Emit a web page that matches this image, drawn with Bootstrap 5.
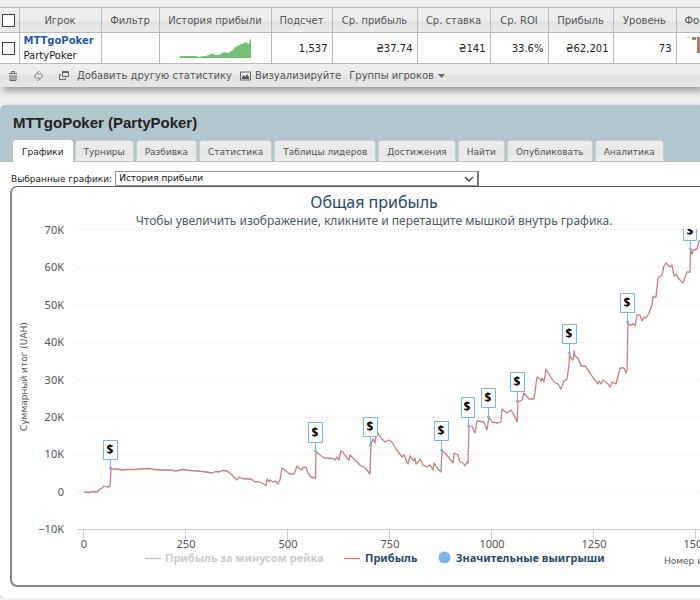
<!DOCTYPE html>
<html lang="ru">
<head>
<meta charset="utf-8">
<meta name="viewport" content="width=device-width, initial-scale=1">
<title>MTTgoPoker (PartyPoker)</title>
<link href="https://cdn.jsdelivr.net/npm/bootstrap@5.3.0/dist/css/bootstrap.min.css" rel="stylesheet">
<style>
body{background:#f1f1f1;font:10px/14px "DejaVu Sans",Verdana,sans-serif;color:#222;overflow-x:hidden}
.stats-box{margin-top:7px;box-shadow:3px 4px 7px #999;background:#fff}
.stats-grid{table-layout:fixed;width:762px;border-collapse:collapse;line-height:15px}
.stats-grid th,.stats-grid td{border:1px solid #bbb;padding:0 4px;text-align:right;white-space:nowrap}
.stats-grid th{height:25px;font-weight:400;text-align:center;color:#555;background:linear-gradient(#f0f0f0,#ebebeb 55%,#e2e2e2 56%,#ececec)}
.stats-grid td{height:29px}
.stats-grid th:first-child,.stats-grid td:first-child{border-left:0;padding:0 0 0 2px;text-align:left}
.stats-grid td:nth-child(2){text-align:left}
.stats-grid a{color:#1e5ca8}
.stats-grid input{appearance:none;display:block;width:13px;height:13px;border:1px solid #444;background:#fff}
.stats-grid svg{display:block}
.tools{height:23px;color:#555;background:linear-gradient(#efefef,#ebebeb 48%,#e3e3e3 50%,#e6e6e6);padding-left:8px}
.tools button{border:0;background:none;color:inherit;padding:0;white-space:nowrap}
.player{margin-top:18px;background:#fff;border-radius:5px 0 0 5px;box-shadow:3px 3px 6px #888;overflow:hidden}
.player-head{background:#b2c6ce;padding:8px 0 0 13px;border-bottom:1px solid #bbb}
.player-head h1{font:700 15px/20px "Liberation Sans",Arial,sans-serif;color:#222;margin:0 0 7px}
.tabs{gap:2px;font-size:9px;line-height:13px;margin-bottom:-1px}
.tabs a{height:22px;padding:5px 8px 0;border:1px solid #c6cdd0;border-bottom-color:#bbb;border-radius:3px 3px 0 0;background:linear-gradient(#eee,#e7e7e7 60%,#efefef);color:#555;text-decoration:none;white-space:nowrap}
.tabs a.active{background:#fff;border-color:#fff;color:#222}
.picker{padding:9px 0 0 11px;font-size:9px;gap:3px}
.picker select{appearance:none;width:364px;height:15px;border:1px solid #999;border-right:2px solid #777;border-radius:0;font-size:9px;line-height:13px;color:#111;padding:0 3px;background:#fff url("data:image/svg+xml,%3Csvg xmlns='http://www.w3.org/2000/svg' width='10' height='6'%3E%3Cpath d='M1 1l4 4 4-4' fill='none' stroke='%23444' stroke-width='1.4'/%3E%3C/svg%3E") no-repeat right 3px center}
.chart-frame{margin:0 0 11px 10px;border:2px solid #888;border-right:0;border-top:1px solid #555;border-radius:7px 0 0 7px;overflow:hidden}
.chart-frame svg{display:block;width:100%;height:398px;font-family:"Noto Sans","Open Sans",sans-serif}
</style>
<script src="https://cdn.jsdelivr.net/npm/bootstrap@5.3.0/dist/js/bootstrap.bundle.min.js"></script>
</head>
<body>
<section class="stats-box">
<div class="overflow-hidden">
<table class="stats-grid">
<colgroup><col style="width:19px"><col style="width:82px"><col style="width:58px"><col style="width:112px"><col style="width:61px"><col style="width:85px"><col style="width:73px"><col style="width:58px"><col style="width:65px"><col style="width:63px"><col style="width:86px"></colgroup>
<thead><tr><th><input type="checkbox" aria-label="Выбрать все"></th><th>Игрок</th><th>Фильтр</th><th>История прибыли</th><th>Подсчет</th><th>Ср. прибыль</th><th>Ср. ставка</th><th>Ср. ROI</th><th>Прибыль</th><th>Уровень</th><th class="text-start ps-2">Форма</th></tr></thead>
<tbody><tr><td><input type="checkbox" aria-label="Выбрать MTTgoPoker"></td><td><a href="#" class="fw-bold text-decoration-none">MTTgoPoker</a><br>PartyPoker</td><td></td>
<td><svg class="mx-auto" width="72" height="20"><path fill="#74bf73" d="M0 20v-1l2-1h15l3 1 4-1h3l2-1 4-1h2l2 1h2l3-1v-1l4-1 2 1h2l2-2 2-1 2-3 3-1 3-2h2l2-2 2 1 2 1 1-4 2-3h2l2-2V3l2-1h1V20z"/></svg></td>
<td>1,537</td><td>₴37.74</td><td>₴141</td><td>33.6%</td><td>₴62,201</td><td>73</td>
<td class="align-top pt-1"><svg class="ms-1" width="70" height="20"><path fill="#c07070" d="M-3 0h3v1h-3zM7 0h4v3H7zM12 0h7v16h-7z"/><path fill="#9ce09a" d="M2 0h3v1H2z"/></svg></td></tr></tbody>
</table>
</div>
<div class="tools d-flex align-items-center overflow-hidden">
<button type="button" aria-label="Удалить"><svg class="d-block" width="10" height="12" fill="none" stroke="#666"><path d="M1 3.500h8M3.500 3V1.500h3V3M2 5v5.500h6V5M4 5v5M6 5v5"/></svg></button>
<button type="button" class="ms-3" aria-label="Обновить"><svg class="d-block" width="9" height="12" fill="none" stroke="#777"><path d="M5.500 1l-2 2 2 2M3.500 3C0 4 0 8 3 9M3.500 11l2-2-2-2M5.500 9C9 8 9 4 6 3"/></svg></button>
<button type="button" class="ms-3 d-flex align-items-center gap-2"><svg width="10" height="10" fill="none" stroke="#666"><path d="M3.500.5h6v5h-6zM3.500 1.500h6M2 3.500H.5v5h6V7"/></svg>Добавить другую статистику</button>
<button type="button" class="ms-2 d-flex align-items-center gap-1"><svg width="11" height="10"><path d="M.5 1h10v8H.5z" fill="#eee" stroke="#666"/><path d="M2 8V6l2-2 1.500 2L7 3l2 3v2z" fill="#555"/></svg>Визуализируйте</button>
<button type="button" class="ms-2 d-flex align-items-center gap-1">Группы игроков<svg width="7" height="4"><path d="M0 0h7L3.500 4z" fill="#666"/></svg></button>
</div>
</section>

<main class="player">
<header class="player-head">
<h1>MTTgoPoker (PartyPoker)</h1>
<nav class="tabs d-flex" aria-label="Разделы"><a href="#" class="active" aria-current="page">Графики</a><a href="#">Турниры</a><a href="#">Разбивка</a><a href="#">Статистика</a><a href="#">Таблицы лидеров</a><a href="#">Достижения</a><a href="#">Найти</a><a href="#">Опубликовать</a><a href="#">Аналитика</a></nav>
</header>
<div class="picker d-flex align-items-center"><label for="graph">Выбранные графики:</label><select id="graph"><option>История прибыли</option></select></div>
<div class="chart-frame">
<svg role="img" aria-label="Общая прибыль">
<defs><clipPath id="plot"><path d="M78 229h800v310H78z"/></clipPath></defs>
<g transform="translate(-12 -187)">
<g text-anchor="middle"><text x="374" y="208" font-size="16" fill="#274b6d">Общая прибыль</text>
<text x="374" y="225" font-size="12" fill="#4d5a63">Чтобы увеличить изображение, кликните и перетащите мышкой внутрь графика.</text></g>
<path d="M78 229.500h700M78 267.500h700M78 305.500h700M78 342.500h700M78 380.500h700M78 417.500h700M78 454.500h700M78 492.500h700" stroke="#d4d4d4" stroke-dasharray="1 3"/>
<path d="M78 529.500h700" stroke="#c8c8c8"/>
<path d="M83.500 530v9M185.500 530v9M287.500 530v9M389.500 530v9M491.500 530v9M593.500 530v9M695.500 530v9" stroke="#c0d0e0"/>
<g font-size="11" fill="#555" text-anchor="end"><text x="64" y="234">70K</text><text x="64" y="271">60K</text><text x="64" y="309">50K</text><text x="64" y="346">40K</text><text x="64" y="384">30K</text><text x="64" y="421">20K</text><text x="64" y="458">10K</text><text x="64" y="496">0</text><text x="64" y="533">−10K</text></g>
<g font-size="11" fill="#555" text-anchor="middle"><text x="84" y="548">0</text><text x="186" y="548">250</text><text x="288" y="548">500</text><text x="390" y="548">750</text><text x="492" y="548">1000</text><text x="594" y="548">1250</text><text x="696" y="548">1500</text></g>
<text transform="translate(27 431) rotate(-90)" font-size="9" fill="#555" font-family="DejaVu Sans">Суммарный итог (UAH)</text>
<text x="664" y="564" font-size="9" fill="#555" font-family="DejaVu Sans">Номер игры</text>
<g clip-path="url(#plot)">
<path fill="none" stroke="#c97f7f" stroke-width="1.300" stroke-linejoin="round" d="M84 492L89 492.500 93 491.500 97 492 100 489 102 488 104 486 107 487 110 486.500 111 469 117 469 122 470 128 469.500 135 469.500 140 469 149 468.500 154 469.500 162 470 170 470 176 471 183 469.500 190 470.500 197 471 206 472 212 473 216 471.500 219 472 222 470.500 227 471 231 474 237 480 239 477 242 478.500 248 479 251 479 255 482 258 481.500 262 483 266 485.500 267 479 269 482 270 480 273 482 275 481 278 484 280 480 282 468 284 469.500 287 472 290 474 294 474 296 469 297 466 299 468 302 470 303 467.500 306 467.500 308 473 311 477 315.500 478 316 451.500 320 455 324 458 333 458.500 335 460 337 457 339 460 341 451 343 452 346 457 349 460 350 455 355 460 361 466 364 467 367 470 370 474 371 444 373 439 375 443 376 436 378 433 382 439 385 442 389 440 392 442 396 449 402 457 404 455 408 464 410 456 414 461 415 458 416 464 418 462 420 459 423 465 427 467 430 465 433 470 434 463 437 468 441 472 442 451 445 453 450 459 453 463 454 453 458 455 460 462 463 463 465 466 467 462 468 463 469 427 472 426 475 433 477 421 484 422 487 430 489 417 492 422 498 423 501 422 502 409 507 413 511 410 515 417 517 422 518 402 522 400 524 393 529 399 534 399 537 377 540 379 541 381 542 378 544 382 546 369 550 376 554 382 558 384 561 389 564 381 567 379 569 365 569.500 354 571 358 573 360 574 351 575 356 578 358 581 366 585 366 590 373 594 379 598 384 599 381 601 384 603 380 608 384 610 387 612 382 616 384 619 372 620 368 624 368 626 373 627 371 628 323 630 325 634 324 635 326 637 315 640 315 642 321 644 317 646 318 649 313 652 305 653 297 656 297 658 278 662 275 664 266 666 263 670 267 672 265 674 276 676 274 678 278 683 283 686 275 687 272 690 272 690.500 250 692 254 693 250 697 249 699 241 703 240"/>
<g fill="#fff" stroke="#7cb5ec"><path d="M110.500 460v8M315.500 443v8M370.500 437v8M441.500 441v9M468.500 418v8M488.500 408v9M517.500 392v9M569.500 344v9M627.500 313v9M690.500 241v8"/>
<path d="M103.500 440.500h14v19h-14zM308.500 422.500h14v20h-14zM363.500 417.500h14v19h-14zM434.500 421.500h14v19h-14zM461.500 397.500h13v20h-13zM481.500 388.500h14v19h-14zM510.500 372.500h14v19h-14zM562.500 324.500h14v19h-14zM620.500 293.500h14v19h-14zM683.500 221.500h13v19h-13z"/></g>
<g fill="#7cb5ec"><circle cx="110.500" cy="468" r="1.500"/><circle cx="315.500" cy="451" r="1.500"/><circle cx="370.500" cy="445" r="1.500"/><circle cx="441.500" cy="450" r="1.500"/><circle cx="468.500" cy="426" r="1.500"/><circle cx="488.500" cy="417" r="1.500"/><circle cx="517.500" cy="401" r="1.500"/><circle cx="569.500" cy="353" r="1.500"/><circle cx="627.500" cy="322" r="1.500"/><circle cx="690.500" cy="249" r="1.500"/></g>
<g font-size="12" font-weight="700" fill="#000" text-anchor="middle"><text x="110" y="454">$</text><text x="315" y="437">$</text><text x="370" y="431">$</text><text x="441" y="435">$</text><text x="467" y="411">$</text><text x="488" y="402">$</text><text x="517" y="386">$</text><text x="569" y="338">$</text><text x="627" y="307">$</text><text x="690" y="235">$</text></g>
</g>
<path d="M145 558.500h16" stroke="#ccc" stroke-width="1.300"/><path d="M344 558.500h16" stroke="#c97f7f" stroke-width="1.300"/><circle cx="444.500" cy="557.500" r="6" fill="#7cb5ec"/>
<g font-size="11" font-weight="700" fill="#274b6d"><text x="165" y="562" fill="#ccc">Прибыль за минусом рейка</text><text x="365" y="562">Прибыль</text><text x="456" y="562">Значительные выигрыши</text></g>
</g>
</svg>
</div>
</main>
</body>
</html>
